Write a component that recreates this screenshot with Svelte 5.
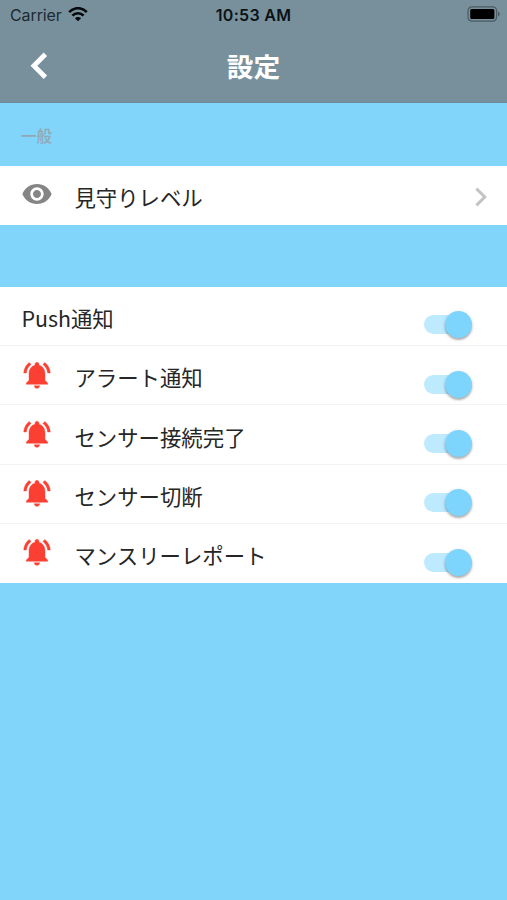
<script>
  let rows = $state([
    { label: 'Push通知', icon: false, on: true },
    { label: 'アラート通知', icon: true, on: true },
    { label: 'センサー接続完了', icon: true, on: true },
    { label: 'センサー切断', icon: true, on: true },
    { label: 'マンスリーレポート', icon: true, on: true }
  ]);
</script>

<div class="screen">
  <header>
    <div class="status">
      <div class="carrier">
        <span>Carrier</span>
        <svg class="wifi" viewBox="0 0 20 15" width="20" height="15" fill="none" stroke="#06090c" stroke-width="2.7">
          <path d="M1.2 5.2C6-.1 14-.1 18.8 5.2" />
          <path d="M4.4 8.7C7.5 5.4 12.5 5.4 15.6 8.7" />
          <path d="M10 14.3l-3.1-3.1c1.7-1.7 4.5-1.7 6.2 0z" fill="#06090c" stroke="none" />
        </svg>
      </div>
      <span class="time">10:53 AM</span>
      <svg class="battery" viewBox="0 0 34 16" width="34" height="16">
        <rect x="1" y=".8" width="28.6" height="14.4" rx="4" fill="none" stroke="#4b5b63" stroke-width="1.2" />
        <rect x="3.2" y="3" width="24.2" height="10" rx="1.5" fill="#000" />
        <path d="M31 5.6c2.2.8 2.2 4 0 4.8z" fill="#4b5b63" />
      </svg>
    </div>
    <div class="nav">
      <button class="back" aria-label="戻る">
        <svg viewBox="0 0 18 28" width="18" height="28" fill="none" stroke="#fff" stroke-width="4.8">
          <path d="M15.4 2.3L3.9 13.8 15.4 25.3" />
        </svg>
      </button>
      <h1>設定</h1>
      <span></span>
    </div>
  </header>

  <div class="section">一般</div>

  <div class="card">
    <div class="row">
      <svg class="icon" viewBox="0 0 24 24" fill="#858585">
        <path d="M12 4.5C7 4.5 2.73 7.61 1 12c1.73 4.39 6 7.5 11 7.5s9.27-3.11 11-7.5c-1.73-4.39-6-7.5-11-7.5zM12 17c-2.76 0-5-2.24-5-5s2.24-5 5-5 5 2.24 5 5-2.24 5-5 5zm0-8c-1.66 0-3 1.34-3 3s1.34 3 3 3 3-1.34 3-3-1.34-3-3-3z" />
      </svg>
      <span class="label">見守りレベル</span>
      <svg class="chevron" viewBox="0 0 12 20" width="12" height="20" fill="none" stroke="#c3c3c3" stroke-width="2.9">
        <path d="M1.4 1.6L9.8 10 1.4 18.4" />
      </svg>
    </div>
  </div>

  <div class="card toggles">
    {#each rows as row}
      <div class="row">
        {#if row.icon}
          <svg class="icon" viewBox="0 0 24 24" fill="#fb4033">
            <path stroke="#fb4033" stroke-width=".3" d="M7.58 4.08L6.15 2.65C3.75 4.48 2.17 7.3 2.03 10.5h2c.15-2.65 1.51-4.97 3.55-6.42zm12.39 6.42h2c-.15-3.2-1.73-6.02-4.12-7.85l-1.42 1.43c2.02 1.45 3.39 3.77 3.54 6.42zM18 11c0-3.07-1.64-5.64-4.5-6.32V4c0-.83-.67-1.5-1.5-1.5s-1.5.67-1.5 1.5v.68C7.63 5.36 6 7.92 6 11v5l-2 2v1h16v-1l-2-2v-5zm-6 11c.14 0 .27-.01.4-.04.65-.14 1.18-.58 1.44-1.18.1-.24.15-.5.15-.78h-4c.01 1.1.9 2 2.01 2z" />
          </svg>
        {/if}
        <span class="label">{row.label}</span>
        <button
          class="switch"
          class:off={!row.on}
          role="switch"
          aria-checked={row.on}
          aria-label={row.label}
          onclick={() => (row.on = !row.on)}
        ><i></i></button>
      </div>
    {/each}
  </div>
</div>

<style>
  :global(body) {
    background: #81d4fa;
  }
  .screen {
    box-sizing: border-box;
    height: 900px;
    overflow: hidden;
    background: #81d4fa;
    font-family: "Noto Sans CJK JP", sans-serif;
    color: #262626;
  }
  header {
    box-sizing: border-box;
    height: 103px;
    background: #78909c;
    border-bottom: 1px solid #6e8b99;
  }
  .status {
    display: grid;
    grid-template-columns: 1fr auto 1fr;
    align-items: center;
    height: 29px;
    padding: 0 6px 0 10px;
    font-family: Inter, sans-serif;
    font-size: 16px;
    color: #1c2a33;
  }
  .carrier {
    display: flex;
    align-items: center;
    gap: 6px;
    letter-spacing: -0.1px;
  }
  .time {
    font-weight: 600;
    color: #0b1217;
    letter-spacing: 0.3px;
    margin-right: 4px;
  }
  .battery {
    justify-self: end;
    margin-top: -1px;
  }
  .nav {
    display: grid;
    grid-template-columns: 1fr auto 1fr;
    align-items: center;
    height: 74px;
  }
  button {
    border: 0;
    padding: 0;
    background: none;
  }
  .back {
    display: flex;
    justify-self: start;
    padding-left: 30px;
  }
  h1 {
    margin: 0;
    font-size: 26.7px;
    line-height: 74px;
    font-weight: 700;
    color: #fff;
  }
  .section {
    box-sizing: border-box;
    height: 62.5px;
    padding: 19.5px 21px 0;
    font-size: 15.5px;
    line-height: 24px;
    color: #91a8b3;
    font-weight: 500;
  }
  .card {
    background: #fff;
  }
  .toggles {
    margin-top: 62px;
  }
  .row {
    display: flex;
    box-sizing: border-box;
    height: 59.3px;
    padding: 0 20px 0 21.4px;
  }
  .toggles .row {
    padding-right: 35px;
  }
  .row:not(:last-child) {
    border-bottom: 1px solid #f3f3f3;
  }
  .icon {
    width: 32px;
    height: 32px;
    margin: 12.5px 21px 0 0;
    flex: none;
  }
  .label {
    flex: 1;
    padding-top: 15.2px;
    font-size: 21.4px;
    line-height: 32px;
    white-space: nowrap;
  }
  .chevron {
    margin-top: 21px;
  }
  .switch {
    display: flex;
    align-items: center;
    justify-content: flex-end;
    width: 48px;
    height: 19px;
    margin-top: 28.7px;
    border-radius: 10px;
    background: linear-gradient(#beeafe, #beeafe) left / 44px 100% no-repeat;
  }
  .switch i {
    width: 27px;
    height: 27px;
    flex: none;
    border-radius: 50%;
    background: #7dd5fd;
    box-shadow: 0 2px 2px rgba(0, 0, 0, 0.25), 0 1px 4px rgba(0, 0, 0, 0.12);
  }
  .switch.off {
    justify-content: flex-start;
  }
</style>
